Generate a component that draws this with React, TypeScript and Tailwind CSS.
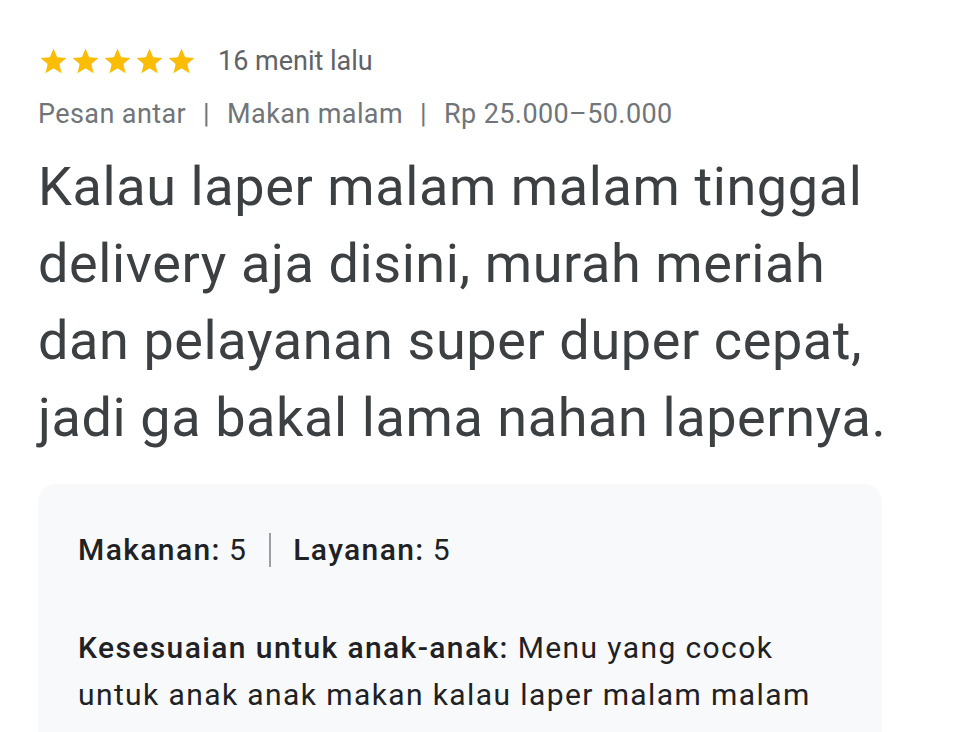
export default function App() {
  const stars = [0, 1, 2, 3, 4];
  return (
    <div className="min-h-[732px] w-[960px] overflow-hidden bg-white pl-[38px] pt-[46px] font-['Roboto',sans-serif]">
      <div className="flex items-center gap-[21px]">
        <div className="flex gap-[1px]">
          {stars.map((s) => (
            <svg key={s} width="31" height="31" viewBox="0 0 24 24">
              <path
                fill="#fbbc04"
                d="M12 17.27 18.18 21l-1.64-7.03L22 9.24l-7.19-.61L12 2 9.19 8.63 2 9.24l5.46 4.73L5.82 21z"
              />
            </svg>
          ))}
        </div>
        <span className="text-[27px] leading-none text-[#5f6368]">16 menit lalu</span>
      </div>

      <div className="mt-[24px] flex items-center text-[27px] leading-none tracking-[0.4px] text-[#70757a]">
        <span>Pesan antar</span>
        <span className="px-[17px]">|</span>
        <span>Makan malam</span>
        <span className="px-[17px]">|</span>
        <span>Rp 25.000–50.000</span>
      </div>

      <p className="mt-[20px] w-[910px] text-[54px] leading-[77px] tracking-[0.6px] text-[#3c4043]">
        Kalau laper malam malam tinggal
        <br />
        delivery aja disini, murah meriah
        <br />
        dan pelayanan super duper cepat,
        <br />
        jadi ga bakal lama nahan lapernya.
      </p>

      <div className="mt-[28px] w-[844px] rounded-t-[18px] bg-[#f8f9fa] px-[40px] pt-[49px] pb-[30px] text-[30px] tracking-[1.4px] text-[#202124]">
        <div className="flex items-center leading-none">
          <span className="font-medium">Makanan:</span>
          <span className="ml-[8px]">5</span>
          <span className="mx-[22px] h-[34px] w-[2px] bg-[#9aa0a6]" />
          <span className="font-medium">Layanan:</span>
          <span className="ml-[8px]">5</span>
        </div>
        <p className="mt-[57px] leading-[47px]">
          <span className="font-medium">Kesesuaian untuk anak-anak:</span> Menu yang cocok
          <br />
          untuk anak anak makan kalau laper malam malam
        </p>
      </div>
    </div>
  );
}
